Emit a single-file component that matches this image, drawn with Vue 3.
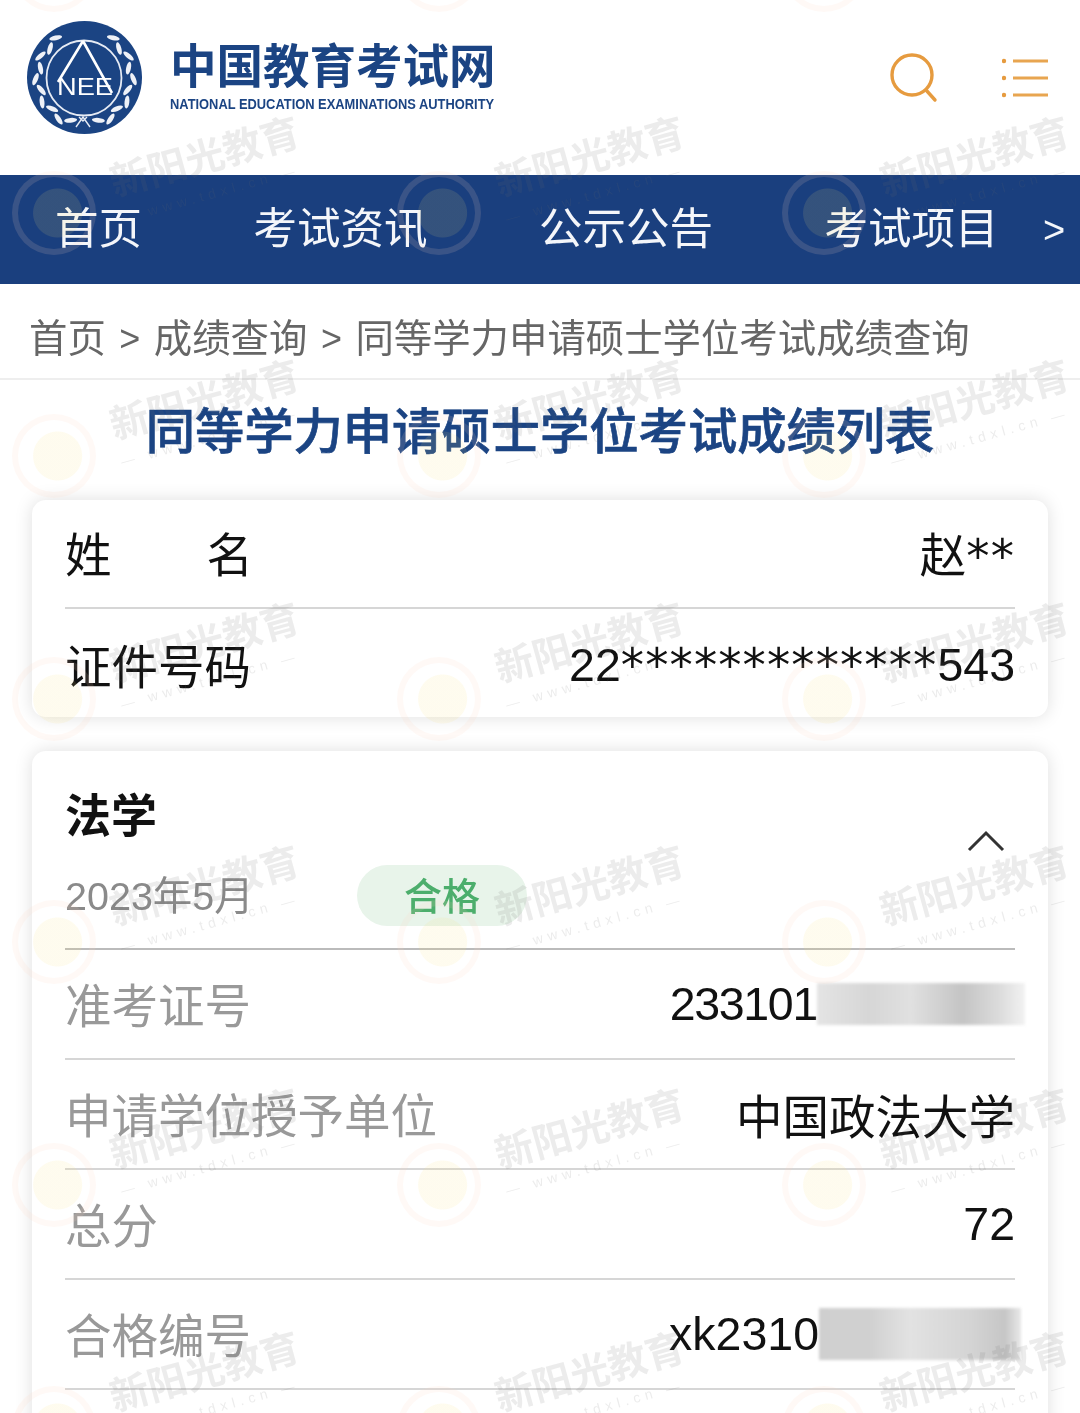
<template>
  <div class="page">
    <header class="top">
      <div class="brand">
        <svg class="logo" viewBox="0 0 115 113">
          <ellipse cx="57.5" cy="56.5" rx="57.5" ry="56.5" fill="#1b4483" />
          <circle cx="57" cy="57" r="37.5" fill="none" stroke="#e6ebf4" stroke-width="1.8" />
          <path d="M56 20 L31 61 M56 20 L85 72" fill="none" stroke="#fff" stroke-width="2.6" />
          <text x="58" y="74" class="nee" text-anchor="middle" textLength="56" lengthAdjust="spacingAndGlyphs">NEE</text>
          <path d="M49 106 L56 96 L63 106 M52 96 L56 100 L60 96" fill="none" stroke="#e6ebf4" stroke-width="1.4" />
          <ellipse
            v-for="(l, i) in leaves"
            :key="i"
            :cx="l.x"
            :cy="l.y"
            rx="6.5"
            ry="2.4"
            fill="#eef1f7"
            :transform="`rotate(${l.r} ${l.x} ${l.y})`"
          />
        </svg>
        <div class="brand-text">
          <div class="brand-cn">中国教育考试网</div>
          <div class="brand-en">NATIONAL EDUCATION EXAMINATIONS AUTHORITY</div>
        </div>
      </div>
      <div class="top-icons">
        <svg class="ico-search" viewBox="0 0 48 50">
          <circle cx="22" cy="22" r="20" fill="none" stroke="#e69b3f" stroke-width="3.4" />
          <path d="M36 37 L45 47" fill="none" stroke="#e69b3f" stroke-width="3.4" stroke-linecap="round" />
        </svg>
        <svg class="ico-menu" viewBox="0 0 46 40">
          <g fill="#e69b3f">
            <circle cx="2" cy="3" r="2.2" />
            <circle cx="2" cy="20" r="2.2" />
            <circle cx="2" cy="37" r="2.2" />
          </g>
          <path d="M11 3 H46 M11 20 H46 M11 37 H46" stroke="#e8a550" stroke-width="3" fill="none" />
        </svg>
      </div>
    </header>

    <nav class="nav">
      <span v-for="n in navItems" :key="n">{{ n }}</span>
      <span class="nav-more">&gt;</span>
    </nav>

    <div class="crumbs">
      <span>首页</span>
      <span class="sep">&gt;</span>
      <span>成绩查询</span>
      <span class="sep">&gt;</span>
      <span>同等学力申请硕士学位考试成绩查询</span>
    </div>

    <h1 class="title">同等学力申请硕士学位考试成绩列表</h1>

    <section class="card">
      <div class="row dark">
        <span class="name-label cn"><i>姓</i><i>名</i></span>
        <span class="cn">赵<b class="stars">**</b></span>
      </div>
      <div class="row dark last">
        <span>证件号码</span>
        <span class="latin">22<b class="stars">*************</b>543</span>
      </div>
    </section>

    <section class="card second">
      <div class="head">
        <div>
          <div class="subject">法学</div>
          <div class="meta">
            <span class="date">2023年5月</span>
            <span class="pill">合格</span>
          </div>
        </div>
        <svg class="chevron" viewBox="0 0 38 22">
          <path d="M2 20 L19 3 L36 20" fill="none" stroke="#333" stroke-width="3" />
        </svg>
      </div>
      <div class="row">
        <span class="label">准考证号</span>
        <span class="value tight">233101<i class="mask mask-a"></i></span>
      </div>
      <div class="row">
        <span class="label">申请学位授予单位</span>
        <span class="value cn-value">中国政法大学</span>
      </div>
      <div class="row">
        <span class="label">总分</span>
        <span class="value">72</span>
      </div>
      <div class="row">
        <span class="label">合格编号</span>
        <span class="value">xk2310<i class="mask mask-b"></i></span>
      </div>
    </section>

    <div class="watermarks">
      <div v-for="i in 21" :key="i" class="tile">
        <div class="ring"></div>
        <template v-if="i > 3">
          <div class="wm-text">新阳光教育</div>
          <div class="wm-url">— www.tdxl.cn —</div>
        </template>
      </div>
    </div>
  </div>
</template>

<script setup>
const navItems = ['首页', '考试资讯', '公示公告', '考试项目']

// 徽标两侧的麦穗，内外两排交替
const leaves = []
for (let a = 126; a <= 252; a += 14) {
  const rad = (a * Math.PI) / 180
  const odd = Math.round((a - 126) / 14) % 2 === 1
  const radius = odd ? 45 : 49
  const tilt = odd ? -24 : 24
  const x = 57.5 + radius * Math.cos(rad)
  const y = 56.5 - radius * Math.sin(rad)
  const r = -(a + 90) + tilt
  leaves.push({ x, y, r })
  leaves.push({ x: 115 - x, y, r: -r })
}
</script>

<style>
html,
body {
  background: #fff;
}
</style>

<style scoped>
.page {
  position: relative;
  width: 1080px;
  height: 1413px;
  overflow: hidden;
  background: #fff;
  font-family: "Liberation Sans", "Noto Sans CJK SC", sans-serif;
  filter: blur(0.5px);
}

.top {
  height: 175px;
  box-sizing: border-box;
  padding: 21px 32px 0 27px;
  display: flex;
  justify-content: space-between;
}
.brand {
  display: flex;
  gap: 28px;
}
.logo {
  width: 115px;
  height: 113px;
}
.nee {
  font: 400 23px "Liberation Sans", sans-serif;
  fill: #fff;
}
.brand-cn {
  margin-top: 21px;
  font-size: 46.5px;
  line-height: 50px;
  font-weight: 700;
  color: #1b4483;
  width: 326px;
  white-space: nowrap;
}
.brand-en {
  margin-top: 4px;
  font-size: 14px;
  line-height: 16px;
  font-weight: 700;
  color: #1b4483;
  white-space: nowrap;
  transform: scaleX(0.92);
  transform-origin: left center;
}
.top-icons {
  display: flex;
  gap: 64px;
  padding-top: 32px;
}
.ico-search {
  width: 48px;
  height: 50px;
}
.ico-menu {
  width: 46px;
  height: 40px;
  margin-top: 5px;
}

.nav {
  height: 109px;
  padding-left: 55px;
  display: flex;
  align-items: center;
  gap: 111.5px;
  background: #1a3f7e;
  color: #f4f6fa;
  font-size: 43.5px;
  line-height: 1;
  white-space: nowrap;
}
.nav-more {
  margin-left: -67px;
  font-size: 38px;
}

.crumbs {
  height: 96px;
  box-sizing: border-box;
  padding: 8px 0 0 29px;
  border-bottom: 2px solid #eee;
  display: flex;
  align-items: center;
  gap: 13.5px;
  font-size: 38.4px;
  color: #666;
  white-space: nowrap;
}
.sep {
  padding-top: 8px;
  font-size: 36px;
}

.title {
  margin: 0;
  height: 120px;
  box-sizing: border-box;
  padding-top: 17px;
  font-size: 49.3px;
  line-height: 70px;
  font-weight: 500;
  text-align: center;
  color: #1b4483;
  white-space: nowrap;
  -webkit-text-stroke: 0.7px #1b4483;
}

.card {
  margin: 0 32px;
  border-radius: 14px;
  background: #fff;
  box-shadow: 0 0 18px rgba(0, 0, 0, 0.13);
}
.second {
  margin-top: 34px;
  height: 700px;
}

.row {
  height: 110px;
  box-sizing: border-box;
  margin: 0 33px;
  border-bottom: 2px solid #d6d6d6;
  display: flex;
  align-items: center;
  justify-content: space-between;
  font-size: 46.5px;
  white-space: nowrap;
}
.row.dark {
  height: 109px;
  color: #111;
}
.row.last {
  border-bottom: none;
  height: 108px;
}
.cn {
  padding-bottom: 4px;
}
.latin {
  padding-top: 4px;
}
.stars {
  font-family: "DejaVu Sans", sans-serif;
  font-weight: 400;
  letter-spacing: 1.1px;
}
.name-label {
  display: flex;
  gap: 95px;
}
.name-label i {
  font-style: normal;
}
.label {
  padding-bottom: 4px;
  color: #999;
}
.value {
  color: #111;
  display: flex;
  align-items: center;
}
.tight {
  letter-spacing: -1.3px;
}
.cn-value {
  padding-bottom: 2px;
}

.head {
  height: 199px;
  box-sizing: border-box;
  margin: 0 33px;
  padding: 40px 10px 0 0;
  border-bottom: 2px solid #bbb;
  display: flex;
  justify-content: space-between;
}
.subject {
  font-size: 46px;
  line-height: 50px;
  font-weight: 700;
  color: #111;
}
.meta {
  margin-top: 23px;
  display: flex;
  align-items: center;
  gap: 105px;
}
.date {
  width: 187px;
  white-space: nowrap;
  padding-bottom: 6px;
  font-size: 39.5px;
  color: #8a8a8a;
}
.pill {
  width: 170px;
  height: 61px;
  box-sizing: border-box;
  padding-bottom: 5px;
  border-radius: 31px;
  background: #e8f4ea;
  color: #4cae6c;
  font-size: 38px;
  font-weight: 500;
  display: flex;
  align-items: center;
  justify-content: center;
}
.chevron {
  width: 38px;
  height: 22px;
  margin-top: 39px;
}

.mask {
  display: block;
  width: 208px;
  margin-right: -10px;
  filter: blur(1.5px);
}
.mask-a {
  height: 42px;
  background: linear-gradient(90deg, #e4e4e4, #d6d6d6 25%, #e0e0e0 45%, #c4c4c4 70%, #dcdcdc 88%, #f2f2f2);
}
.mask-b {
  width: 202px;
  height: 52px;
  margin-right: -6px;
  background: linear-gradient(90deg, #cfcfcf, #d0d0d0 25%, #e2e2e2 45%, #d4d4d4 75%, #c6c6c6 92%, #e8e8e8);
}

.watermarks {
  position: absolute;
  left: 0;
  top: -188px;
  width: 1155px;
  display: grid;
  grid-template-columns: repeat(3, 385px);
  grid-auto-rows: 243px;
  pointer-events: none;
}
.tile {
  position: relative;
}
.ring {
  position: absolute;
  left: 12px;
  top: 116px;
  width: 84px;
  height: 84px;
  box-sizing: border-box;
  border-radius: 50%;
  border: 6px solid rgba(255, 215, 190, 0.14);
  background: radial-gradient(circle at 55% 50%, rgba(250, 225, 120, 0.12) 0 24px, transparent 25px);
}
.wm-text {
  position: absolute;
  left: 105px;
  top: 78px;
  width: 200px;
  font-size: 39px;
  line-height: 50px;
  font-weight: 700;
  text-align: center;
  white-space: nowrap;
  color: rgba(110, 110, 110, 0.13);
  transform: rotate(-15.5deg);
}
.wm-url {
  position: absolute;
  left: 100px;
  top: 130px;
  width: 220px;
  font-size: 14px;
  letter-spacing: 5px;
  line-height: 18px;
  text-align: center;
  white-space: nowrap;
  color: rgba(110, 110, 110, 0.13);
  transform: rotate(-15.5deg);
}
</style>
